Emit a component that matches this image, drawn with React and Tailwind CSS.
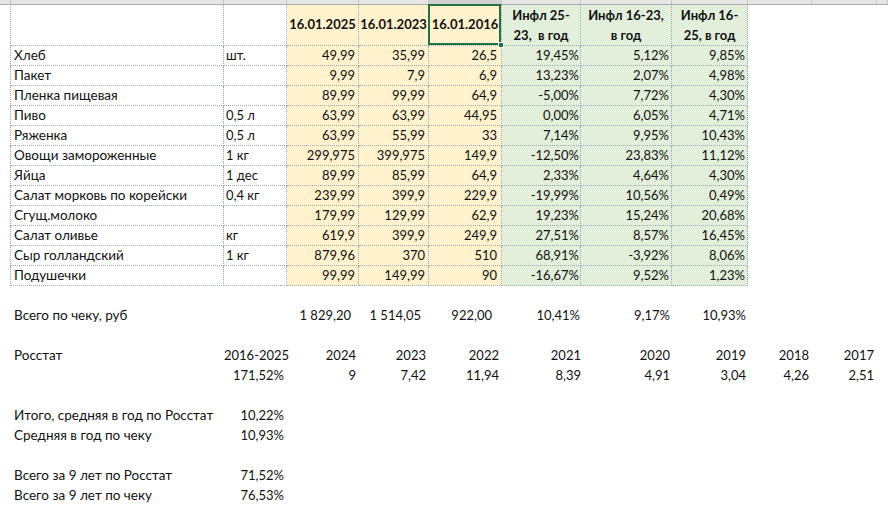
import React from "react";

const COLS = "grid grid-cols-[11px_213px_63px_72px_70px_73px_79px_91px_76px_64px_65px_11px]";
const DOT = "border-dotted border-[#9aa7b8]";

const data = [
  ["Хлеб", "шт.", "49,99", "35,99", "26,5", "19,45%", "5,12%", "9,85%"],
  ["Пакет", "", "9,99", "7,9", "6,9", "13,23%", "2,07%", "4,98%"],
  ["Пленка пищевая", "", "89,99", "99,99", "64,9", "-5,00%", "7,72%", "4,30%"],
  ["Пиво", "0,5 л", "63,99", "63,99", "44,95", "0,00%", "6,05%", "4,71%"],
  ["Ряженка", "0,5 л", "63,99", "55,99", "33", "7,14%", "9,95%", "10,43%"],
  ["Овощи замороженные", "1 кг", "299,975", "399,975", "149,9", "-12,50%", "23,83%", "11,12%"],
  ["Яйца", "1 дес", "89,99", "85,99", "64,9", "2,33%", "4,64%", "4,30%"],
  ["Салат морковь по корейски", "0,4 кг", "239,99", "399,9", "229,9", "-19,99%", "10,56%", "0,49%"],
  ["Сгущ.молоко", "", "179,99", "129,99", "62,9", "19,23%", "15,24%", "20,68%"],
  ["Салат оливье", "кг", "619,9", "399,9", "249,9", "27,51%", "8,57%", "16,45%"],
  ["Сыр голландский", "1 кг", "879,96", "370", "510", "68,91%", "-3,92%", "8,06%"],
  ["Подушечки", "", "99,99", "149,99", "90", "-16,67%", "9,52%", "1,23%"],
];

function StripCell({ selected }) {
  return (
    <div
      className={
        selected
          ? "h-[5px] bg-[#d2d2d2] border-r border-[#c6c6c6] border-b border-b-[#217346]"
          : "h-[5px] bg-[#e6e6e6] border-r border-[#c6c6c6] border-b border-b-[#ababab]"
      }
    />
  );
}

function TableRow({ r }) {
  const cell = `border-b border-r ${DOT} leading-[19px] whitespace-nowrap overflow-hidden`;
  return (
    <div className={`${COLS} h-[20px]`}>
      <div className={`border-r ${DOT}`} />
      <div className={`${cell} pl-[3px] text-[13.5px]`}>{r[0]}</div>
      <div className={`${cell} pl-[2px]`}>{r[1]}</div>
      <div className={`${cell} bg-[#fff2cc] text-right pr-[3px]`}>{r[2]}</div>
      <div className={`${cell} bg-[#fff2cc] text-right pr-[3px]`}>{r[3]}</div>
      <div className={`${cell} bg-[#fff2cc] text-right pr-[4px]`}>{r[4]}</div>
      <div className={`${cell} bg-[#e2efda] text-right pr-[1px]`}>{r[5]}</div>
      <div className={`${cell} bg-[#e2efda] text-right pr-[2px]`}>{r[6]}</div>
      <div className={`${cell} bg-[#e2efda] text-right pr-[2px]`}>{r[7]}</div>
      <div />
      <div />
      <div />
      <div />
    </div>
  );
}

function PlainRow({ cells = [], pads = [] }) {
  return (
    <div className={`${COLS} h-[20px] leading-[19px]`}>
      {Array.from({ length: 12 }).map((_, i) => {
        const v = cells[i];
        if (i === 1) {
          return (
            <div key={i} className="pl-[3px] whitespace-nowrap text-[13.5px]">
              {v || ""}
            </div>
          );
        }
        return (
          <div key={i} className={`text-right whitespace-nowrap ${pads[i] || "pr-[3px]"}`}>
            {v || ""}
          </div>
        );
      })}
    </div>
  );
}

export default function App() {
  const hdr = `border-b border-r ${DOT} font-bold`;
  return (
    <div
      className="w-[888px] h-[516px] overflow-hidden bg-white text-[13px] text-[#111]"
      style={{ fontFamily: "Lato, 'Open Sans', sans-serif" }}
    >
      {/* column header strip */}
      <div className={COLS}>
        {Array.from({ length: 12 }).map((_, i) => (
          <StripCell key={i} selected={i === 5} />
        ))}
      </div>

      {/* header row */}
      <div className={`${COLS} h-[41px]`}>
        <div className={`border-r ${DOT}`} />
        <div className={hdr} />
        <div className={hdr} />
        <div className={`${hdr} bg-[#fff2cc] flex items-center justify-center`}>16.01.2025</div>
        <div className={`${hdr} bg-[#fff2cc] flex items-center justify-center`}>16.01.2023</div>
        <div className={`${hdr} bg-[#fff2cc] flex items-center justify-center relative`}>
          16.01.2016
          <div className="absolute -left-[1px] -top-[1px] right-0 bottom-0 border-2 border-[#217346]" />
          <div className="absolute -right-[3px] -bottom-[3px] w-[6px] h-[6px] bg-[#217346] border border-white" />
        </div>
        <div className={`${hdr} bg-[#e2efda] flex flex-col items-center justify-center leading-[20px] whitespace-pre`}>
          <span>Инфл 25-</span>
          <span>23,  в год</span>
        </div>
        <div className={`${hdr} bg-[#e2efda] flex flex-col items-center justify-center leading-[20px]`}>
          <span>Инфл 16-23,</span>
          <span>в год</span>
        </div>
        <div className={`${hdr} bg-[#e2efda] flex flex-col items-center justify-center leading-[20px]`}>
          <span>Инфл 16-</span>
          <span>25, в год</span>
        </div>
        <div />
        <div />
        <div />
        <div />
      </div>

      {data.map((r, i) => (
        <TableRow key={i} r={r} />
      ))}

      <PlainRow />
      <PlainRow
        cells={["", "Всего по чеку, руб", "", "1 829,20", "1 514,05", "922,00", "10,41%", "9,17%", "10,93%"]}
        pads={{ 3: "pr-[8px]", 4: "pr-[8px]", 5: "pr-[10px]", 6: "pr-[1px]", 7: "pr-[2px]", 8: "pr-[2px]" }}
      />
      <PlainRow />
      <PlainRow
        cells={["", "Росстат", "2016-2025", "2024", "2023", "2022", "2021", "2020", "2019", "2018", "2017"]}
        pads={{ 2: "pr-0", 6: "pr-0", 7: "pr-[2px]", 8: "pr-[2px]", 10: "pr-[3px]" }}
      />
      <PlainRow
        cells={["", "", "171,52%", "9", "7,42", "11,94", "8,39", "4,91", "3,04", "4,26", "2,51"]}
        pads={{ 2: "pr-[3px]", 6: "pr-0", 7: "pr-[2px]", 8: "pr-[2px]", 10: "pr-[3px]" }}
      />
      <PlainRow />
      <PlainRow cells={["", "Итого, средняя в год по Росстат", "10,22%"]} />
      <PlainRow cells={["", "Средняя в год по чеку", "10,93%"]} />
      <PlainRow />
      <PlainRow cells={["", "Всего за 9 лет по Росстат", "71,52%"]} />
      <PlainRow cells={["", "Всего за 9 лет по чеку", "76,53%"]} />
      <PlainRow />
    </div>
  );
}
